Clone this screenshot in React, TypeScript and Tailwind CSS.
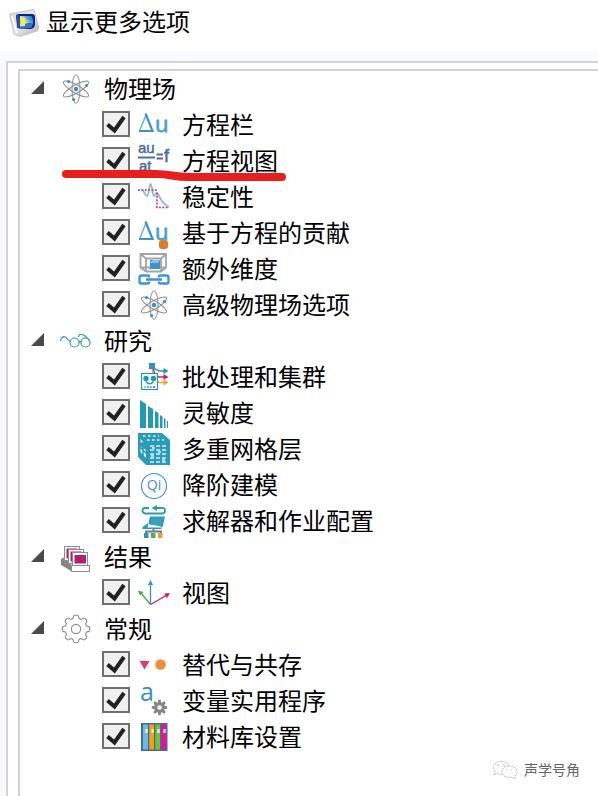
import React, { useState } from 'react';

const FONT = "font-['Liberation_Sans','Noto_Sans_CJK_SC',sans-serif]";

// Outline of a cog with eight rounded teeth
function cogPath(cx: number, cy: number, outer: number, inner: number) {
  const at = (angle: number, r: number) =>
    `${(cx + r * Math.cos(angle)).toFixed(2)} ${(cy + r * Math.sin(angle)).toFixed(2)}`;
  let path = `M${at(-0.26, inner)}`;
  for (let i = 0; i < 8; i++) {
    const base = (i * Math.PI) / 4;
    path += `L${at(base - 0.26, inner)}Q${at(base - 0.2, outer)} ${at(base - 0.1, outer)}`;
    path += `L${at(base + 0.1, outer)}Q${at(base + 0.2, outer)} ${at(base + 0.26, inner)}`;
    path += `Q${at(base + Math.PI / 8, inner - 1)} ${at(base + Math.PI / 4 - 0.26, inner)}`;
  }
  return `${path}Z`;
}

interface IconProps {
  children: React.ReactNode;
}

function Icon({ children }: IconProps) {
  return (
    <svg viewBox="0 0 32 32" className="w-8 h-8 shrink-0 overflow-visible" fill="none" aria-hidden="true">
      {children}
    </svg>
  );
}

function AtomIcon() {
  return (
    <Icon>
      <g stroke="#8d8d8d" strokeWidth="1">
        <ellipse cx="16" cy="16" rx="14.3" ry="4" transform="rotate(90 16 16)" />
        <ellipse cx="16" cy="16" rx="14.3" ry="4" transform="rotate(30 16 16)" />
        <ellipse cx="16" cy="16" rx="14.3" ry="4" transform="rotate(150 16 16)" />
      </g>
      <g fill="#2f8fd3">
        <circle cx="16" cy="16" r="2.2" />
        <circle cx="8.5" cy="8.5" r="1.6" />
        <circle cx="26.5" cy="12.5" r="1.6" />
        <circle cx="13.6" cy="26.5" r="1.6" />
      </g>
    </Icon>
  );
}

function DeltaU({ dot = false }: { dot?: boolean }) {
  return (
    <Icon>
      <path d="M1.5 22 8 6" stroke="#6fb4e0" strokeWidth="1.6" />
      <path d="M7.500 4.500 14.500 22H1" stroke="#3a92cf" strokeWidth="2.2" />
      <text x="17" y="23" fontSize="22" fill="#4a9fd8" stroke="#4a9fd8" strokeWidth="0.8" fontFamily="Open Sans, sans-serif">u</text>
      {dot && <rect x="21" y="23" width="9" height="9" rx="3" fill="#e07b28" />}
    </Icon>
  );
}

function EquationViewIcon() {
  return (
    <Icon>
      <g fill="#4a6c9f" stroke="#4a6c9f" strokeWidth="0.5" fontFamily="Liberation Sans, sans-serif">
        <text x="0" y="8" fontSize="15">au</text>
        <text x="1" y="26" fontSize="15">at</text>
        <text x="26" y="17" fontSize="18">f</text>
      </g>
      <path d="M0 12.5H17M18.5 9.500H25M18.5 13.500H25" stroke="#4a6c9f" strokeWidth="1.8" />
    </Icon>
  );
}

function StabilityIcon() {
  return (
    <Icon>
      <path d="M3 9C6 8 7 15 9 15S11 3 12.500 3 14.500 15 16 15 18 10 20 13 23 22 31 26" stroke="#8fb8d4" strokeWidth="1.8" />
      <path d="M0 9H17.500Q19 9 19 11V26.500H31" stroke="#c2388a" strokeWidth="1.6" strokeDasharray="2 1.4" />
    </Icon>
  );
}

function DimensionIcon() {
  return (
    <Icon>
      <g stroke="#a2a4a8" strokeWidth="1.8">
        <path d="M2.500 1H28V14.500L23 18.500H8L2.500 14.500ZM8 5.500H23V18.500H8ZM2.500 1 8 5.500M28 1 23 5.500M2.500 14.500H28" />
      </g>
      <rect x="12" y="7" width="10" height="9" fill="#3d93d0" />
      <path d="M12 9 15 7H22L20 10H12Z" fill="#8dc0e6" />
      <g stroke="#3d95d2" strokeWidth="2.4">
        <path d="M11 24.500V23.500Q11 22.500 9.500 22.500H3.500Q1.500 22.500 1.500 24.500V28.500Q1.500 30.500 3.500 30.500H9.500Q11 30.500 11 29.500V28.500M21 24.500V23.500Q21 22.500 22.500 22.500H28.500Q30.500 22.500 30.500 24.500V28.500Q30.500 30.500 28.500 30.500H22.500Q21 30.500 21 29.500V28.500M8 26.500H24" />
      </g>
    </Icon>
  );
}

function GlassesIcon() {
  return (
    <Icon>
      <g stroke="#2c9db8" strokeWidth="1.2">
        <circle cx="14.500" cy="17.500" r="4.500" />
        <circle cx="25.500" cy="17.500" r="4.500" />
        <path d="M19 17Q20 16 21 17M.5 16C1 12 4 10 6.500 13S8.500 16 10.500 16M18.500 12C18.500 8 23 9 25 11S28.500 14 29.500 16" />
      </g>
    </Icon>
  );
}

function BatchIcon() {
  return (
    <Icon>
      <path d="M15 7 21 10H27" stroke="#2398b5" strokeWidth="1.4" />
      <path d="M15 7Q17 16 21 16H27" stroke="#d81b60" strokeWidth="1.4" />
      <path d="M14 7Q16 21.500 21 21.500H27" stroke="#f2a33a" strokeWidth="1.400" />
      <path d="M25.500 7 30.500 10 25.500 13Z" fill="#2398b5" />
      <path d="M25.500 13 30.500 16 25.500 19Z" fill="#d81b60" />
      <path d="M25.500 18.500 30.500 21.500 25.500 24.500Z" fill="#f2a33a" />
      <rect x="11" y="2" width="6" height="6" fill="#2f8fd3" />
      <rect x="3.500" y="12.500" width="16" height="16" fill="#fff" stroke="#2398b5" strokeWidth="1.2" />
      <circle cx="8" cy="17.500" r="2.700" fill="#2398b5" />
      <circle cx="15.500" cy="17.500" r="2.700" fill="#2398b5" />
      <path d="M8 20.500Q11.700 25 15.500 20.500" stroke="#2398b5" strokeWidth="1.500" />
      <path d="M6 26H8" stroke="#8bb9df" strokeWidth="1.700" />
      <path d="M9 26H14" stroke="#2f8fd3" strokeWidth="1.700" strokeDasharray="1.800 1" />
      <path d="M15 26H17" stroke="#d81b60" strokeWidth="1.700" />
    </Icon>
  );
}

function SensitivityIcon() {
  return (
    <Icon>
      <path d="M2 3 8 7V31H2ZM10 9 15 12V31H10ZM17 14 20.500 16V31H17ZM22 18 24.500 19.500V31H22ZM26 21 27.500 22V31H26ZM29 24H30V31H29Z" fill="#2499b6" />
    </Icon>
  );
}

function MeshIcon() {
  return (
    <Icon>
      <path d="M0 0H24L32 7V32H8L0 24Z" fill="#2a9cb8" />
      <path d="M2.500 6V9.500L6 10ZM2.500 13V21L8 26V17Z" fill="#e4f4f7" />
      <path d="M1 13 9 21M5 9V27M1 19 9 27" stroke="#2a9cb8" strokeWidth="1.600" />
      <g stroke="#d8eff4" strokeWidth="1.300">
        <path d="M5 3H21M9 7H26" strokeDasharray="2.500 2.500" />
        <path d="M12 13H29M12 17H29M12 21H29M12 25H29M12 29H29" strokeDasharray="4 2" />
      </g>
      <path d="M14 15H17M20 19H23M13 23H16M24 27H27" stroke="#d8eff4" strokeWidth="1.600" />
    </Icon>
  );
}

function ModelReductionIcon() {
  return (
    <Icon>
      <circle cx="16" cy="17" r="12.500" stroke="#3d8fd0" strokeWidth="1.100" />
      <text x="16" y="21" fontSize="14" textAnchor="middle" fill="#3d8fd0" fontFamily="Open Sans, sans-serif">Qi</text>
    </Icon>
  );
}

function SolverIcon() {
  return (
    <Icon>
      <path d="M11 3H7Q4.500 3 4.500 5.500T7 8.500H24Q27 8.500 27 5.500T24 3H18" stroke="#2d9bb7" strokeWidth="1.800" />
      <path d="M13.500 3 19 0V6Z" fill="#2d9bb7" />
      <path d="M12 11.500H27L24.500 22.500H9.500ZM9.500 18.500 4.500 22V24H23L24.500 22Z" fill="#2d9bb7" />
      <path d="M13.500 13.500H24.500L23 20H12Z" fill="#3c9fbc" />
      <path d="M15.500 24V27M8 28V26.500H23V28" stroke="#777" strokeWidth="1.800" />
      <path d="M6 28H10.500V33H6Z" fill="#2499b6" />
      <path d="M13 28H17.500V33H13Z" fill="#4faf4f" />
      <path d="M20 28H24.500V33H20Z" fill="#f39b3c" />
    </Icon>
  );
}

function ResultsIcon() {
  return (
    <Icon>
      <path d="M1 18 4 16.500 12 24.500V30.500L1 24Z" fill="#858786" />
      <g fill="#b0206c" stroke="#8d8d8d" strokeWidth="1">
        <rect x="4.500" y="5.500" width="15" height="14" fill="#fff" />
        <rect x="6.500" y="7.500" width="11" height="10" stroke="none" />
        <rect x="8.500" y="8.500" width="15" height="14" fill="#fff" />
        <rect x="10.500" y="10.500" width="11" height="10" stroke="none" />
        <rect x="12.500" y="11.500" width="15" height="14" fill="#fff" />
        <rect x="14.500" y="14" width="11.500" height="8.500" stroke="none" />
        <rect x="11.500" y="24.500" width="18" height="6" fill="#fff" />
      </g>
    </Icon>
  );
}

function AxesIcon() {
  return (
    <Icon>
      <path d="M12.500 27.500V7" stroke="#2f8fd3" strokeWidth="1.300" />
      <path d="M12.500 27.500 3 16" stroke="#4ca64c" strokeWidth="1.300" />
      <path d="M12.500 27.500 29 18" stroke="#d81b60" strokeWidth="1.300" />
      <path d="M12.500 3 15 8H10Z" fill="#2f8fd3" />
      <path d="M0 13.500 5.500 15 2 18.500Z" fill="#4ca64c" />
      <path d="M32 16 26.500 16.500 29 21Z" fill="#d81b60" />
    </Icon>
  );
}

function GearIcon() {
  return (
    <Icon>
      <path d={cogPath(16, 16, 13.8, 11.2)} stroke="#8a8a8a" strokeWidth="1.1" strokeLinejoin="round" />
      <circle cx="16" cy="16" r="4.600" stroke="#8a8a8a" strokeWidth="1.100" />
    </Icon>
  );
}

function OverrideIcon() {
  return (
    <Icon>
      <path d="M1.500 12H11.500L6.500 20.500Z" fill="#e93670" />
      <circle cx="22.500" cy="15.500" r="5.300" fill="#f18d3b" />
    </Icon>
  );
}

function VariableIcon() {
  return (
    <Icon>
      <text x="2" y="16" fontSize="25" fill="#3a8fce" fontFamily="Open Sans, sans-serif">a</text>
      <path d={cogPath(21.5, 22.5, 7.8, 5.8)} fill="#828488" />
      <circle cx="21.500" cy="22.500" r="2.300" fill="#fff" />
    </Icon>
  );
}

function LibraryIcon() {
  return (
    <Icon>
      <rect x="3" y="2" width="26.500" height="28" fill="#47699c" />
      <path d="M5 3.500H10V28.500H5Z" fill="#5fbfea" />
      <path d="M11.300 3.500H16V28.500H11.300Z" fill="#ff9d0a" />
      <path d="M17.300 3.500H22V28.500H17.300Z" fill="#68c92b" />
      <path d="M23.300 3.500H28V28.500H23.300Z" fill="#ee0c9c" />
      <path d="M8.500 8V12M14.500 8V12M20.500 8V12M26.500 8V12" stroke="#fff" strokeWidth="2" />
    </Icon>
  );
}

function AppLogo() {
  return (
    <svg viewBox="0 0 32 30" className="w-8 h-[30px] shrink-0" fill="none" aria-hidden="true">
      <defs>
        <linearGradient id="shell" x1="0" y1="0" x2="1" y2="1">
          <stop offset="0" stopColor="#d2d2d2" />
          <stop offset="0.5" stopColor="#e9e9e9" />
          <stop offset="1" stopColor="#aaaaaa" />
        </linearGradient>
        <linearGradient id="screen" x1="0" y1="0.8" x2="1" y2="0.2">
          <stop offset="0" stopColor="#fff04a" />
          <stop offset="0.4" stopColor="#e8e36a" />
          <stop offset="0.65" stopColor="#4fb0d8" />
          <stop offset="1" stopColor="#1e6ed8" />
        </linearGradient>
      </defs>
      <path d="M1.500 6 26 1.500 31 20 29 23 12 28.500 6 26Z" fill="url(#shell)" stroke="#c8c8c8" strokeLinejoin="round" />
      <path d="M4 8 9 25" stroke="#fff" strokeWidth="1.500" />
      <path d="M8 8Q8 6 11 6H24Q27 6 27 9V17Q26 21 22 21L11 20.500Q9 20 9 18Z" fill="#0c2486" />
      <path d="M12 8H24Q26 12 25 16Q19 14 12 18Z" fill="url(#screen)" />
      <path d="M12 18Q19 14 25 16L23 20H12Z" fill="#2f6fd8" />
      <path d="M12 10H17V18L12 18.500Z" fill="#f7e85c" />
      <path d="M8 7.500Q10 13 9 20L12 20Q13 13 11 7Z" fill="#2450b4" />
    </svg>
  );
}

interface Option {
  id: string;
  label: string;
  icon: React.ReactNode;
  marked?: boolean;
}

interface Group {
  id: string;
  label: string;
  icon: React.ReactNode;
  options: Option[];
}

const GROUPS: Group[] = [
  {
    id: 'physics',
    label: '物理场',
    icon: <AtomIcon />,
    options: [
      { id: 'equation-sections', label: '方程栏', icon: <DeltaU /> },
      { id: 'equation-view', label: '方程视图', icon: <EquationViewIcon />, marked: true },
      { id: 'stabilization', label: '稳定性', icon: <StabilityIcon /> },
      { id: 'contributions', label: '基于方程的贡献', icon: <DeltaU dot /> },
      { id: 'extra-dimensions', label: '额外维度', icon: <DimensionIcon /> },
      { id: 'advanced-physics', label: '高级物理场选项', icon: <AtomIcon /> },
    ],
  },
  {
    id: 'study',
    label: '研究',
    icon: <GlassesIcon />,
    options: [
      { id: 'batch', label: '批处理和集群', icon: <BatchIcon /> },
      { id: 'sensitivity', label: '灵敏度', icon: <SensitivityIcon /> },
      { id: 'multigrid', label: '多重网格层', icon: <MeshIcon /> },
      { id: 'model-reduction', label: '降阶建模', icon: <ModelReductionIcon /> },
      { id: 'solver', label: '求解器和作业配置', icon: <SolverIcon /> },
    ],
  },
  {
    id: 'results',
    label: '结果',
    icon: <ResultsIcon />,
    options: [{ id: 'views', label: '视图', icon: <AxesIcon /> }],
  },
  {
    id: 'general',
    label: '常规',
    icon: <GearIcon />,
    options: [
      { id: 'override', label: '替代与共存', icon: <OverrideIcon /> },
      { id: 'variables', label: '变量实用程序', icon: <VariableIcon /> },
      { id: 'materials', label: '材料库设置', icon: <LibraryIcon /> },
    ],
  },
];

function OptionRow({ option }: { option: Option }) {
  const [checked, setChecked] = useState(true);

  return (
    <li className="relative h-9 pl-[82px] flex items-center">
      <span className="grid mr-2 pb-0.5">
        <input
          id={option.id}
          type="checkbox"
          checked={checked}
          onChange={() => setChecked(!checked)}
          className="col-start-1 row-start-1 appearance-none w-7 h-[26px] border-2 border-[#707070] bg-[#f0f0f0]"
        />
        {checked && (
          <svg viewBox="0 0 28 26" className="col-start-1 row-start-1 w-7 h-[26px] pointer-events-none" fill="none" aria-hidden="true">
            <path d="M5.500 13.500 12.500 19.500 22 6" stroke="#222" strokeWidth="4" />
          </svg>
        )}
      </span>
      <label htmlFor={option.id} className="flex items-center gap-3 whitespace-nowrap">
        {option.icon}
        <span className="pt-0.5">{option.label}</span>
      </label>
      {/* Red pen stroke under the highlighted option */}
      {option.marked && (
        <svg viewBox="0 0 224 12" className="absolute left-[42px] -bottom-0.5 w-[224px] h-3 pointer-events-none" fill="none" aria-hidden="true">
          <path d="M4 5H94C108 5 112 8 126 8H220" stroke="#e81f1f" strokeWidth="8" strokeLinecap="round" />
        </svg>
      )}
    </li>
  );
}

function GroupSection({ group }: { group: Group }) {
  const [open, setOpen] = useState(true);

  return (
    <section>
      <h2 className="h-9 pl-[10px] flex items-center">
        <button
          type="button"
          aria-label={group.label}
          aria-expanded={open}
          onClick={() => setOpen(!open)}
          className="w-4 h-5 mr-[14px] pb-1 flex items-center"
        >
          <svg viewBox="0 0 16 16" className="w-4 h-4" aria-hidden="true">
            <path d={open ? 'M14 2V15H1Z' : 'M4 2 12 8 4 14Z'} fill="#4a4a4a" />
          </svg>
        </button>
        <span className="flex items-center gap-3">
          {group.icon}
          <span className="pt-0.5">{group.label}</span>
        </span>
      </h2>
      {open && (
        <ul>
          {group.options.map((option) => (
            <OptionRow key={option.id} option={option} />
          ))}
        </ul>
      )}
    </section>
  );
}

export default function App() {
  return (
    <div className={`relative min-h-screen flex flex-col overflow-hidden bg-[#f9faff] text-black text-2xl leading-9 ${FONT}`}>
      <header className="h-[51px] pl-2 pb-[6px] flex items-center gap-[6px] bg-white">
        <AppLogo />
        <h1>显示更多选项</h1>
      </header>

      <main className="flex-1 flex flex-col mt-[10px] ml-[6px] pt-[6px] pl-[10px] border-t-2 border-l-2 border-[#d3d3d5] bg-white">
        <div className="flex-1 border-t-2 border-l-2 border-[#d3d3d5]">
          {GROUPS.map((group) => (
            <GroupSection key={group.id} group={group} />
          ))}
        </div>
      </main>

      <div className="absolute right-[18px] bottom-4 flex items-center gap-[6px] text-sm leading-5 text-[#666]">
        <svg viewBox="0 0 26 20" className="w-[26px] h-5" fill="none" stroke="#aaa" strokeWidth="0.8" strokeDasharray="2 1" aria-hidden="true">
          <path d="M10 14Q7 15 5 13L2 15 3 11C-1 6 4 1 9 1.500S16 4 17 6" />
          <path d="M17 6C12 6 9 9 10 13S16 18 20 17L23 19 23 16C28 12 24 6 17 6Z" />
          <path d="M5 5H7M11 5H13M14 10H15M19 10H20" strokeDasharray="none" />
        </svg>
        <span>声学号角</span>
      </div>
    </div>
  );
}
